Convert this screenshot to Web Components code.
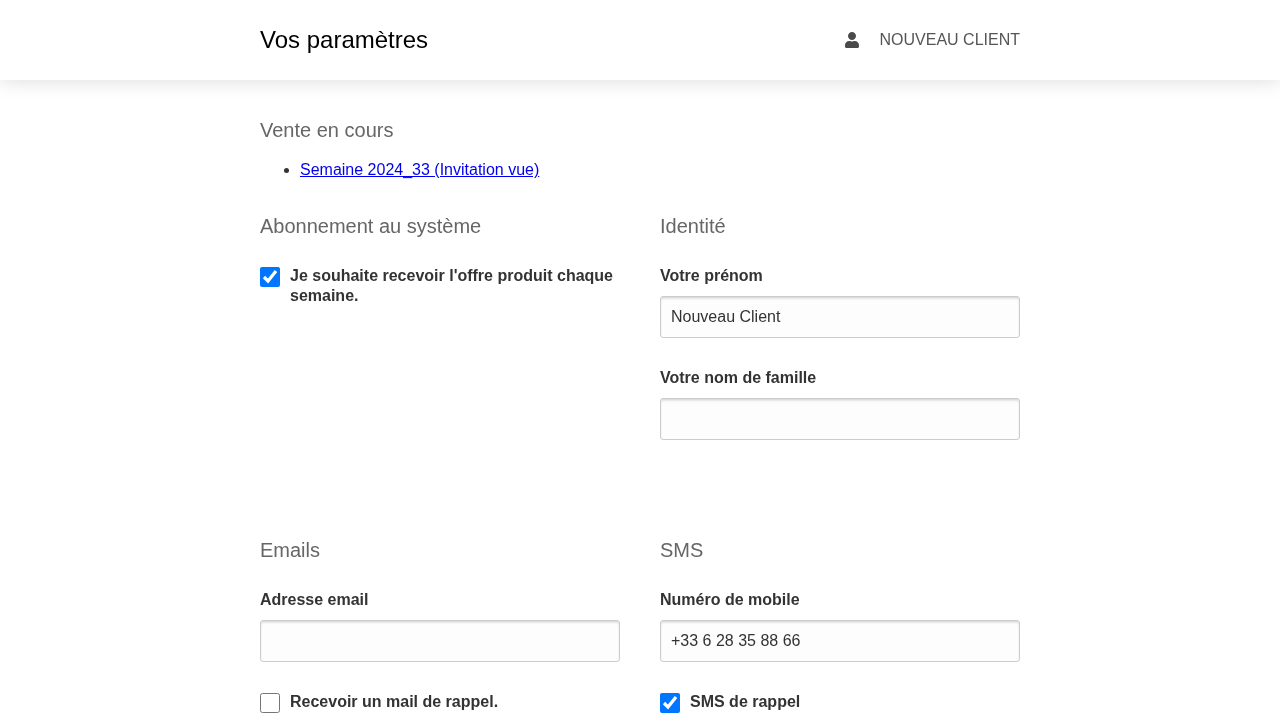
<!DOCTYPE html>
<html lang="fr">
<head>
<meta charset="utf-8">
<title>Vos paramètres</title>
<style>
  html { margin: 0; padding: 0; background: #fff; }
  body {
    margin: 0;
    font-family: "Liberation Sans", Arial, sans-serif;
    font-size: 16px;
    color: #333;
    will-change: opacity;
  }
</style>
</head>
<body>
<app-header heading="Vos paramètres" user="NOUVEAU CLIENT"></app-header>
<settings-page>
  <settings-section heading="Vente en cours" wide>
    <sale-list>
      <a href="#">Semaine 2024_33 (Invitation vue)</a>
    </sale-list>
  </settings-section>

  <settings-row class="first">
    <settings-section heading="Abonnement au système">
      <check-field checked label="Je souhaite recevoir l'offre produit chaque semaine."></check-field>
    </settings-section>
    <settings-section heading="Identité">
      <text-field label="Votre prénom" value="Nouveau Client"></text-field>
      <text-field label="Votre nom de famille" value=""></text-field>
    </settings-section>
  </settings-row>

  <settings-row>
    <settings-section heading="Emails">
      <text-field label="Adresse email" value=""></text-field>
      <check-field label="Recevoir un mail de rappel."></check-field>
    </settings-section>
    <settings-section heading="SMS">
      <text-field label="Numéro de mobile" value="+33 6 28 35 88 66"></text-field>
      <check-field checked label="SMS de rappel"></check-field>
    </settings-section>
  </settings-row>
</settings-page>

<script>
class AppHeader extends HTMLElement {
  constructor() {
    super();
    this.shadowDOM = this.attachShadow({ mode: 'open' });
  }

  connectedCallback() {
    this.shadowDOM.innerHTML = `
      <style>
        :host {
          display: block;
          position: relative;
          height: 80px;
          background: #fff;
          box-shadow: 0 0 20px rgba(0, 0, 0, 0.15);
        }
        .inner {
          width: 760px;
          height: 100%;
          margin: 0 auto;
          display: flex;
          align-items: center;
          justify-content: space-between;
        }
        h1 {
          margin: 0;
          font-size: 24px;
          font-weight: normal;
          color: #000;
        }
        .user {
          display: flex;
          align-items: center;
          gap: 21px;
          color: #555;
        }
        svg { width: 14px; height: 16px; fill: #4a4a4a; display: block; }
      </style>
      <div class="inner">
        <h1>${this.getAttribute('heading')}</h1>
        <div class="user">
          <svg viewBox="0 0 448 512"><path d="M224 256c70.700 0 128-57.300 128-128S294.700 0 224 0 96 57.300 96 128s57.300 128 128 128zm89.600 32h-16.700c-22.200 10.200-46.900 16-72.900 16s-50.600-5.800-72.900-16h-16.700C60.200 288 0 348.200 0 422.400V464c0 26.500 21.500 48 48 48h352c26.500 0 48-21.500 48-48v-41.600c0-74.200-60.200-134.400-134.400-134.400z"/></svg>
          <span>${this.getAttribute('user')}</span>
        </div>
      </div>
    `;
  }
}

class SettingsPage extends HTMLElement {
  constructor() {
    super();
    this.attachShadow({ mode: 'open' }).innerHTML = `
      <style>
        :host {
          display: flex;
          flex-direction: column;
          gap: 36px;
          width: 760px;
          margin: 0 auto;
          padding-top: 39px;
        }
        ::slotted(.first) { padding-bottom: 63px; }
      </style>
      <slot></slot>
    `;
  }
}

class SettingsRow extends HTMLElement {
  constructor() {
    super();
    this.attachShadow({ mode: 'open' }).innerHTML = `
      <style>
        :host {
          display: grid;
          grid-template-columns: 360px 360px;
          column-gap: 40px;
        }
      </style>
      <slot></slot>
    `;
  }
}

class SettingsSection extends HTMLElement {
  constructor() {
    super();
    this.shadowDOM = this.attachShadow({ mode: 'open' });
  }

  connectedCallback() {
    this.shadowDOM.innerHTML = `
      <style>
        :host { display: block; }
        h2 {
          margin: 0;
          font-size: 20px;
          line-height: 23px;
          font-weight: normal;
          color: #666;
        }
        .body {
          display: flex;
          flex-direction: column;
          gap: 30px;
          margin-top: ${this.hasAttribute('wide') ? '19px' : '28px'};
        }
      </style>
      <h2>${this.getAttribute('heading')}</h2>
      <div class="body"><slot></slot></div>
    `;
  }
}

class SaleList extends HTMLElement {
  constructor() {
    super();
    this.attachShadow({ mode: 'open' }).innerHTML = `
      <style>
        :host { display: block; }
        ul { margin: 0; padding-left: 40px; line-height: 18px; }
        ::slotted(a) { color: #0000ee; }
      </style>
      <ul><li><slot></slot></li></ul>
    `;
  }
}

class TextField extends HTMLElement {
  constructor() {
    super();
    this.shadowDOM = this.attachShadow({ mode: 'open' });
  }

  connectedCallback() {
    this.shadowDOM.innerHTML = `
      <style>
        :host { display: block; }
        label {
          display: block;
          font-weight: bold;
          line-height: 20px;
          margin-bottom: 10px;
        }
        input {
          display: block;
          box-sizing: border-box;
          width: 100%;
          height: 42px;
          margin: 0;
          padding: 0 10px;
          border: 1px solid #ccc;
          border-radius: 3px;
          background: #fdfdfd;
          box-shadow: inset 0 2px 3px -1px rgba(0, 0, 0, 0.2);
          font: 16px "Liberation Sans", Arial, sans-serif;
          color: #333;
          outline: none;
        }
      </style>
      <label>${this.getAttribute('label')}</label>
      <input type="text">
    `;
    this.shadowDOM.querySelector('input').value = this.getAttribute('value') || '';
  }
}

class CheckField extends HTMLElement {
  constructor() {
    super();
    this.shadowDOM = this.attachShadow({ mode: 'open' });
  }

  connectedCallback() {
    this.shadowDOM.innerHTML = `
      <style>
        :host { display: block; }
        label {
          display: flex;
          gap: 10px;
          font-weight: bold;
          line-height: 20px;
        }
        input {
          flex: none;
          width: 20px;
          height: 20px;
          margin: 1px 0 0;
        }
      </style>
      <label>
        <input type="checkbox" ${this.hasAttribute('checked') ? 'checked' : ''}>
        <span>${this.getAttribute('label')}</span>
      </label>
    `;
  }
}

customElements.define('app-header', AppHeader);
customElements.define('settings-page', SettingsPage);
customElements.define('settings-row', SettingsRow);
customElements.define('settings-section', SettingsSection);
customElements.define('sale-list', SaleList);
customElements.define('text-field', TextField);
customElements.define('check-field', CheckField);
</script>
</body>
</html>
